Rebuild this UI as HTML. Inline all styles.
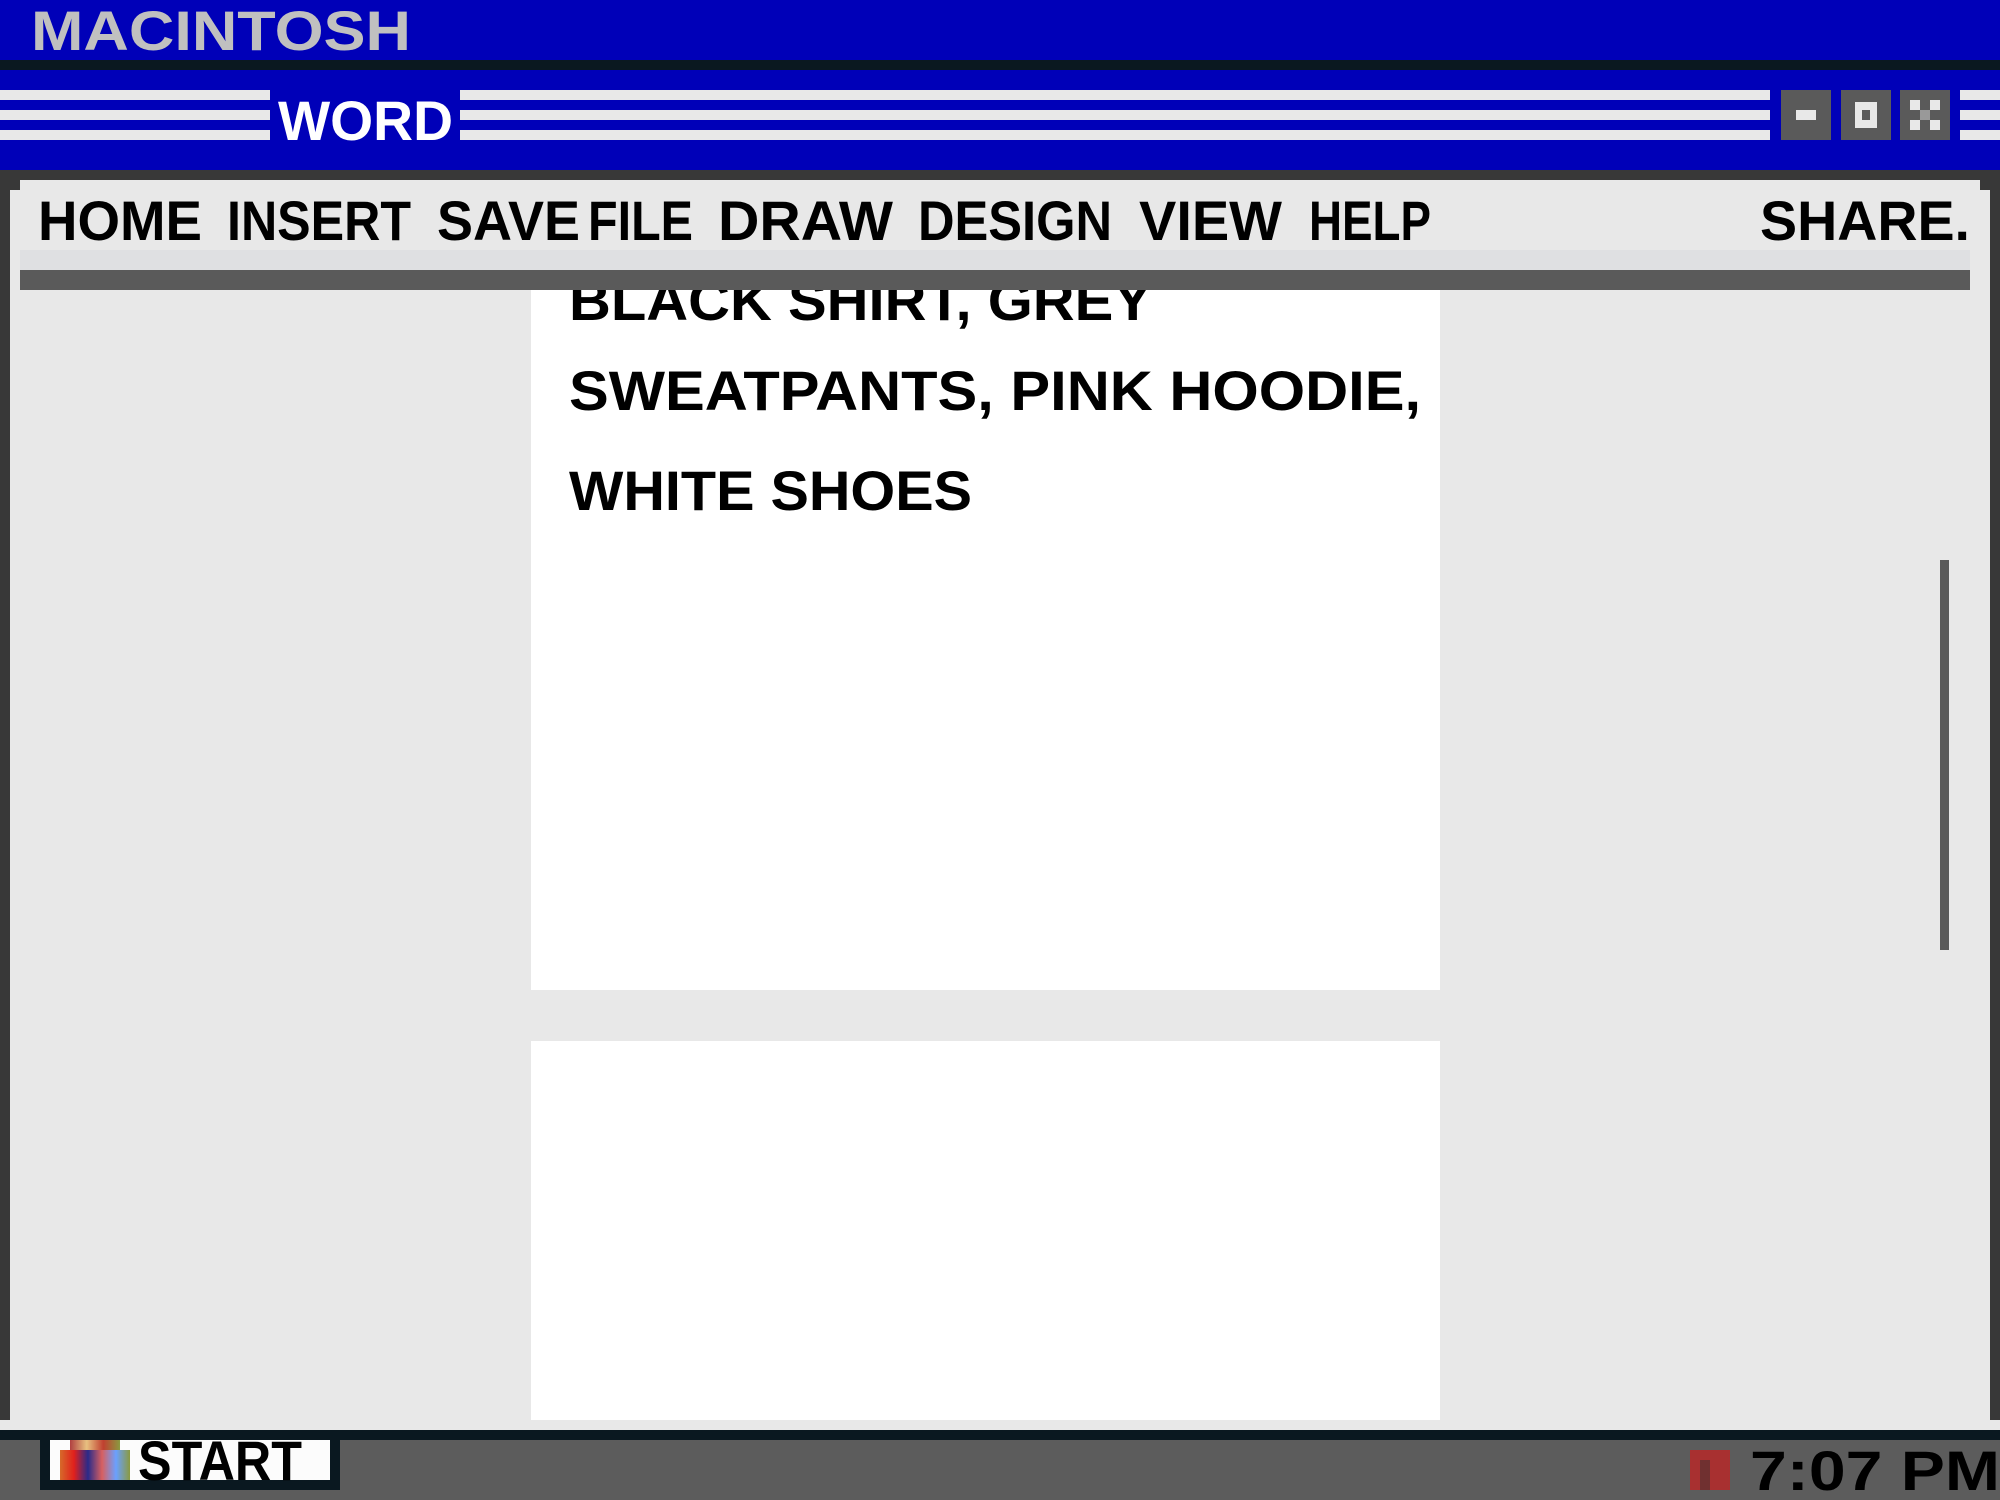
<!DOCTYPE html>
<html><head><meta charset="utf-8"><style>
html,body{margin:0;padding:0;width:2000px;height:1500px;overflow:hidden;background:#e8e8e8}
.a{position:absolute}
svg{position:absolute;left:0;top:0}
text{font-family:"Liberation Sans",sans-serif;font-weight:bold}
</style></head><body>
<div class="a" style="left:0;top:0;width:2000px;height:60px;background:#0000b8"></div>
<div class="a" style="left:0;top:60px;width:2000px;height:10px;background:#0a1820"></div>
<div class="a" style="left:0;top:70px;width:2000px;height:100px;background:#0000b8"></div>
<div class="a" style="left:0;top:90px;width:270px;height:10px;background:#e8e8e8"></div>
<div class="a" style="left:0;top:110px;width:270px;height:10px;background:#e8e8e8"></div>
<div class="a" style="left:0;top:130px;width:270px;height:10px;background:#e8e8e8"></div>
<div class="a" style="left:460px;top:90px;width:1310px;height:10px;background:#e8e8e8"></div>
<div class="a" style="left:460px;top:110px;width:1310px;height:10px;background:#e8e8e8"></div>
<div class="a" style="left:460px;top:130px;width:1310px;height:10px;background:#e8e8e8"></div>
<div class="a" style="left:1960px;top:90px;width:40px;height:10px;background:#e8e8e8"></div>
<div class="a" style="left:1960px;top:110px;width:40px;height:10px;background:#e8e8e8"></div>
<div class="a" style="left:1960px;top:130px;width:40px;height:10px;background:#e8e8e8"></div>
<div class="a" style="left:1781px;top:90px;width:50px;height:50px;background:#5a5a5a"><div class="a" style="left:15px;top:20px;width:20px;height:10px;background:#e8e8e8"></div></div>
<div class="a" style="left:1841px;top:90px;width:50px;height:50px;background:#5a5a5a"><div class="a" style="left:14px;top:12px;width:22px;height:26px;background:#e8e8e8"></div><div class="a" style="left:21px;top:20px;width:8px;height:10px;background:#5a5a5a"></div></div>
<div class="a" style="left:1900px;top:90px;width:50px;height:50px;background:#5a5a5a"><div class="a" style="left:10px;top:10px;width:10px;height:10px;background:#e8e8e8"></div><div class="a" style="left:30px;top:10px;width:10px;height:10px;background:#e8e8e8"></div><div class="a" style="left:20px;top:20px;width:10px;height:10px;background:#999"></div><div class="a" style="left:10px;top:30px;width:10px;height:10px;background:#e8e8e8"></div><div class="a" style="left:30px;top:30px;width:10px;height:10px;background:#e8e8e8"></div></div>
<div class="a" style="left:0;top:170px;width:2000px;height:1250px;background:#383838"></div>
<div class="a" style="left:20px;top:180px;width:1960px;height:20px;background:#e8e8e8"></div>
<div class="a" style="left:10px;top:190px;width:1980px;height:1230px;background:#e8e8e8"></div>
<div class="a" style="left:20px;top:250px;width:1950px;height:20px;background:#dfe0e2"></div>
<div class="a" style="left:20px;top:270px;width:1950px;height:20px;background:#5a5a5a"></div>
<div class="a" style="left:531px;top:290px;width:909px;height:700px;background:#fff"></div>
<div class="a" style="left:531px;top:1041px;width:909px;height:379px;background:#fff"></div>
<div class="a" style="left:1940px;top:560px;width:9px;height:390px;background:#5a5a5a"></div>
<div class="a" style="left:0;top:1430px;width:2000px;height:10px;background:#0a1820"></div>
<div class="a" style="left:0;top:1440px;width:2000px;height:60px;background:#5c5c5c"></div>
<div class="a" style="left:40px;top:1440px;width:300px;height:50px;background:#0a1820"></div>
<div class="a" style="left:50px;top:1440px;width:280px;height:40px;background:#fcfcfc"></div>
<div class="a" style="left:60px;top:1450px;width:70px;height:30px;background:linear-gradient(90deg,#d66a2a,#e0201c,#2a2a8a,#d86060,#6aa0ff,#8a9a40)"></div>
<div class="a" style="left:70px;top:1440px;width:50px;height:10px;background:linear-gradient(90deg,#b04040,#e8c080,#c04030,#8a9a40)"></div>
<div class="a" style="left:1690px;top:1450px;width:40px;height:40px;background:#a83030"></div>
<div class="a" style="left:1700px;top:1460px;width:10px;height:30px;background:#703030"></div>
<svg width="2000" height="1500">
<text x="31" y="50" font-size="56" fill="#c0c0c0" textLength="380" lengthAdjust="spacingAndGlyphs">MACINTOSH</text>
<text x="278" y="140" font-size="56" fill="#fff" textLength="175" lengthAdjust="spacingAndGlyphs">WORD</text>
<g font-size="56" fill="#000">
<text x="38" y="240" textLength="164" lengthAdjust="spacingAndGlyphs">HOME</text>
<text x="227" y="240" textLength="184" lengthAdjust="spacingAndGlyphs">INSERT</text>
<text x="437" y="240" textLength="143" lengthAdjust="spacingAndGlyphs">SAVE</text>
<text x="588" y="240" textLength="105" lengthAdjust="spacingAndGlyphs">FILE</text>
<text x="718" y="240" textLength="175" lengthAdjust="spacingAndGlyphs">DRAW</text>
<text x="918" y="240" textLength="194" lengthAdjust="spacingAndGlyphs">DESIGN</text>
<text x="1139" y="240" textLength="143" lengthAdjust="spacingAndGlyphs">VIEW</text>
<text x="1309" y="240" textLength="122" lengthAdjust="spacingAndGlyphs">HELP</text>
<text x="1760" y="240" textLength="210" lengthAdjust="spacingAndGlyphs">SHARE.</text>
</g>
<g font-size="56" fill="#000">
<text x="569" y="320" textLength="583" lengthAdjust="spacingAndGlyphs">BLACK SHIRT, GREY</text>
<text x="569" y="410" textLength="852" lengthAdjust="spacingAndGlyphs">SWEATPANTS, PINK HOODIE,</text>
<text x="569" y="510" textLength="403" lengthAdjust="spacingAndGlyphs">WHITE SHOES</text>
</g>
<text x="138" y="1480" font-size="56" fill="#000" textLength="164" lengthAdjust="spacingAndGlyphs">START</text>
<text x="1750" y="1490" font-size="56" fill="#000" textLength="250" lengthAdjust="spacingAndGlyphs">7:07 PM</text>
</svg>
<div class="a" style="left:20px;top:250px;width:1950px;height:40px;background:transparent"></div>
<div class="a" style="left:531px;top:270px;width:909px;height:20px;background:#5a5a5a"></div>
</body></html>
